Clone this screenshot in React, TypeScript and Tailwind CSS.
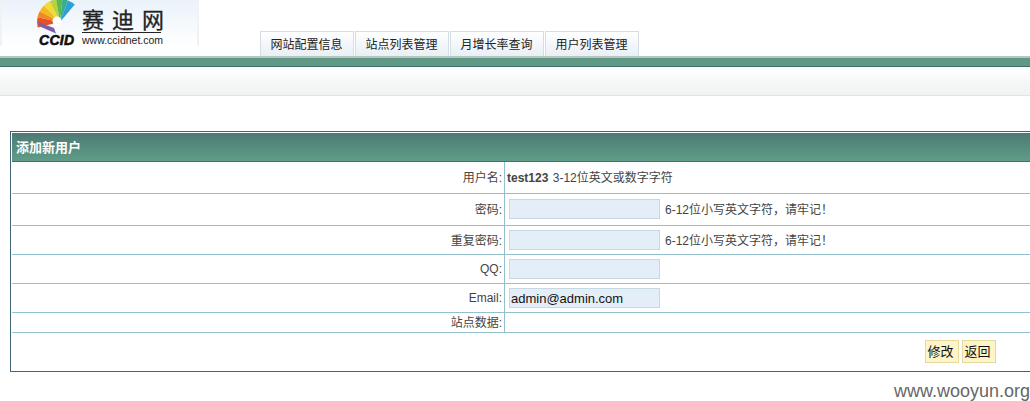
const font = "font-['Arial','Liberation_Sans','Noto_Sans_CJK_SC',sans-serif]";

function Logo() {
  const cx = 60;
  const cy = 22;
  const r = 23;
  const wedges: [number, number, string][] = [
    [-104, -78, "#e4502a"],
    [-78, -62, "#f08a1e"],
    [-62, -44, "#f6b81f"],
    [-44, -26, "#f0dc36"],
    [-26, -10, "#b9d23a"],
    [-10, 6, "#5fb84c"],
    [6, 20, "#35b08f"],
    [20, 40, "#2f9fd4"],
  ];
  const pt = (deg: number, rad: number) => {
    const a = (deg * Math.PI) / 180;
    return `${(cx + rad * Math.sin(a)).toFixed(1)} ${(cy - rad * Math.cos(a)).toFixed(1)}`;
  };
  return (
    <svg width="60" height="46" viewBox="30 0 60 46" className="shrink-0">
      {wedges.map(([a, b, c]) => (
        <path key={a} d={`M${cx} ${cy}L${pt(a, r)}A${r} ${r} 0 0 1 ${pt(b, r)}Z`} fill={c} />
      ))}
      <path d="M38 22 L54 28 L56 33.5 L41 27 Q38.5 25 38 22Z" fill="#7a5ea8" />
      <circle cx="57" cy="21" r="4.5" fill="#fff" />
    </svg>
  );
}

const Label = ({ children }: { children: React.ReactNode }) => (
  <div className="w-[492px] shrink-0 border-r border-[#94bfcc] pr-[2px] text-right text-[#444] text-[12px] h-full flex items-center justify-end">
    {children}
  </div>
);

function Field({ value = "", up = false }: { value?: string; up?: boolean }) {
  return (
    <input
      readOnly
      value={value}
      className={`ml-[4px] w-[151px] h-[20px] bg-[#e3eef8] border border-[#c6d8e4] px-[1px] text-[13px] text-[#111] outline-none ${up ? "mb-[2px]" : ""} ${font}`}
    />
  );
}

const hint = "6-12位小写英文字符，请牢记！";

export default function App() {
  const tabs = ["网站配置信息", "站点列表管理", "月增长率查询", "用户列表管理"];
  return (
    <div className={`h-[401px] w-[1030px] overflow-hidden bg-white relative ${font}`}>
      <div className="h-[56px] flex items-stretch">
        <div className="w-[199px] h-[46px] shrink-0 flex items-start border-x-2 border-[#f0f2f4] bg-gradient-to-b from-[#eaf2fa] to-white">
          <div className="ml-[28px] flex">
            <div className="relative w-[60px] h-[46px]">
              <Logo />
              <span className="absolute left-[9px] top-[33px] text-[14px] leading-[14px] font-bold italic tracking-[0.3px] text-[#111] [-webkit-text-stroke:0.6px_#111] font-['Liberation_Sans',sans-serif]">
                CCID
              </span>
            </div>
            <div className="ml-[-8px] flex flex-col w-[79px]">
              <div className="h-[33px] border-b border-[#222] text-[22px] leading-[28px] tracking-[8px] text-[#222] [-webkit-text-stroke:0.3px_#222] whitespace-nowrap font-['Noto_Sans_CJK_SC',sans-serif] pt-[4px]">
                赛迪网
              </div>
              <div className="text-[10.5px] leading-[11px] pt-[2px] text-[#222] whitespace-nowrap font-['Liberation_Sans',sans-serif]">
                www.ccidnet.com
              </div>
            </div>
          </div>
        </div>
        <div className="ml-[61px] flex gap-[1px] self-end">
          {tabs.map((t) => (
            <div
              key={t}
              className="w-[94px] h-[25px] flex items-center justify-center pr-[1px] pt-[1px] text-[12px] text-[#222] border border-b-0 border-[#d3dde3] bg-gradient-to-b from-white to-[#e8eff6]"
            >
              {t}
            </div>
          ))}
        </div>
      </div>
      <div className="h-[2px] bg-[#b8c4be]" />
      <div className="h-[9px] bg-[#5f9985] border-b-[1px] border-[#3f6f68]" />
      <div className="h-[29px] bg-gradient-to-b from-white to-[#eef2f0] border-b border-[#dfe5e4]" />

      <div className="mt-[35px] ml-[10px] w-[1040px] h-[241px] border border-[#3f6674] pl-[1px] pt-[1px]">
        <div className="h-[29px] bg-gradient-to-b from-[#4d7a74] to-[#5f9d88] border-b border-[#3f6f7f] flex items-center pl-[4px] pt-[1px] text-white font-bold text-[13px]">
          添加新用户
        </div>
        <div className="flex items-center h-[32px] border-b border-[#94bfcc]">
          <div className="w-[1px] h-full shrink-0" />
          <Label>用户名:</Label>
          <div className="ml-[2px] text-[12px] text-[#444]">
            <b className="mr-[1px]">test123</b> 3-12位英文或数字字符
          </div>
        </div>
        <div className="flex items-center h-[32px] border-b border-[#94bfcc]">
          <div className="w-[1px] h-full shrink-0" />
          <Label><span className="pt-[1px]">密码:</span></Label>
          <Field up />
          <span className="ml-[5px] pt-[1px] text-[12px] text-[#444]">{hint}</span>
        </div>
        <div className="flex items-center h-[29px] border-b border-[#94bfcc]">
          <div className="w-[1px] h-full shrink-0" />
          <Label><span className="pt-[1px]">重复密码:</span></Label>
          <Field />
          <span className="ml-[5px] pt-[2px] text-[12px] text-[#444]">{hint}</span>
        </div>
        <div className="flex items-center h-[29px] border-b border-[#94bfcc]">
          <div className="w-[1px] h-full shrink-0" />
          <Label>QQ:</Label>
          <Field />
        </div>
        <div className="flex items-center h-[29px] border-b border-[#94bfcc]">
          <div className="w-[1px] h-full shrink-0" />
          <Label>Email:</Label>
          <Field value="admin@admin.com" />
        </div>
        <div className="flex items-center h-[20px] border-b border-[#94bfcc]">
          <div className="w-[1px] h-full shrink-0" />
          <Label>站点数据:</Label>
        </div>
        <div className="flex gap-[3px] pl-[913px] pt-[7px]">
          {["修改", "返回"].map((b) => (
            <button
              key={b}
              className="w-[34px] h-[23px] bg-[#fdf5c8] border border-[#e6d9a0] pr-[3px] text-[13px] text-[#111]"
            >
              {b}
            </button>
          ))}
        </div>
      </div>
      <div className="absolute right-[0px] top-[381px] text-[18px] leading-[20px] text-[#666] font-['Liberation_Sans',sans-serif]">
        www.wooyun.org
      </div>
    </div>
  );
}
